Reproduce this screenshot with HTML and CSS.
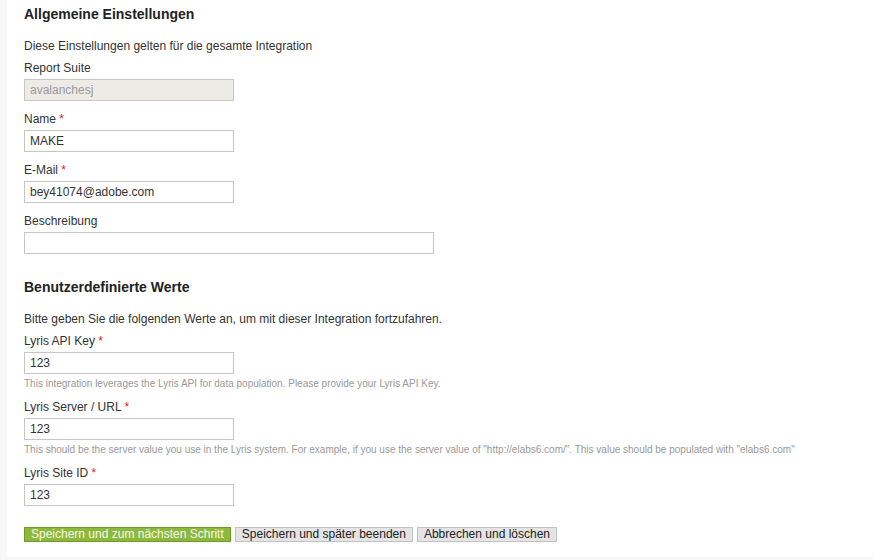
FILE: index.html
```html
<!DOCTYPE html>
<html lang="de">
<head>
<meta charset="utf-8">
<title>Allgemeine Einstellungen</title>
<link rel="stylesheet" href="styles.css">
</head>
<body>
<div class="page">
  <div class="panel">
    <section class="section">
      <h2 class="section-title">Allgemeine Einstellungen</h2>
      <p class="section-desc">Diese Einstellungen gelten für die gesamte Integration</p>
      <div class="field">
        <label class="field-label">Report Suite</label>
        <input class="text-input text-input--readonly" type="text" value="avalanchesj" readonly>
      </div>
      <div class="field">
        <label class="field-label">Name <span class="req">*</span></label>
        <input class="text-input" type="text" value="MAKE">
      </div>
      <div class="field">
        <label class="field-label">E-Mail <span class="req">*</span></label>
        <input class="text-input" type="text" value="bey41074@adobe.com">
      </div>
      <div class="field">
        <label class="field-label">Beschreibung</label>
        <input class="text-input text-input--wide" type="text" value="">
      </div>
    </section>
    <section class="section section--second">
      <h2 class="section-title">Benutzerdefinierte Werte</h2>
      <p class="section-desc">Bitte geben Sie die folgenden Werte an, um mit dieser Integration fortzufahren.</p>
      <div class="field field--help">
        <label class="field-label">Lyris API Key <span class="req">*</span></label>
        <input class="text-input" type="text" value="123">
        <div class="help">This integration leverages the Lyris API for data population. Please provide your Lyris API Key.</div>
      </div>
      <div class="field field--help">
        <label class="field-label">Lyris Server / URL <span class="req">*</span></label>
        <input class="text-input" type="text" value="123">
        <div class="help">This should be the server value you use in the Lyris system. For example, if you use the server value of "http://elabs6.com/". This value should be populated with "elabs6.com"</div>
      </div>
      <div class="field">
        <label class="field-label">Lyris Site ID <span class="req">*</span></label>
        <input class="text-input" type="text" value="123">
      </div>
    </section>
    <div class="actions">
      <button class="btn btn--primary" type="button">Speichern und zum nächsten Schritt</button>
      <button class="btn" type="button">Speichern und später beenden</button>
      <button class="btn" type="button">Abbrechen und löschen</button>
    </div>
  </div>
</div>
</body>
</html>
```
FILE: styles.css
```css
* { box-sizing: border-box; }
html, body {
  margin: 0;
  padding: 0;
  background: #f8f8f8;
  font-family: "Liberation Sans", Arial, sans-serif;
  font-size: 12px;
  color: #333;
}
.page {
  padding-left: 7px;
  height: 560px;
  overflow: hidden;
}
.panel {
  background: #fff;
  height: 557px;
  padding: 6px 17px 0;
}
.section-title {
  margin: 0 0 16px;
  font-size: 14px;
  line-height: 16px;
  font-weight: bold;
  color: #222;
}
.section--second { margin-top: 25px; }
.section-desc {
  margin: 0 0 6px;
  line-height: 16px;
}
.field { margin-bottom: 10px; }
.field--help { margin-bottom: 9px; }
.field-label {
  display: block;
  line-height: 16px;
  margin-bottom: 3px;
  color: #333;
}
.req { color: #e02020; }
.text-input {
  display: block;
  width: 210px;
  height: 22px;
  margin: 0;
  padding: 0 5px;
  border: 1px solid #c6c6c6;
  background: #fff;
  font-family: "Liberation Sans", Arial, sans-serif;
  font-size: 12px;
  color: #333;
  outline: none;
}
.text-input--readonly {
  background: #ecebe6;
  color: #999;
}
.text-input--wide { width: 410px; }
.help {
  margin-top: 3px;
  line-height: 13px;
  font-size: 10px;
  color: #999;
  white-space: nowrap;
}
.actions {
  display: flex;
  gap: 4px;
  margin-top: 21px;
}
.btn {
  height: 15px;
  padding: 0 6px;
  margin: 0;
  border: 1px solid #c2c2c2;
  background: #e4e4e4;
  font-family: "Liberation Sans", Arial, sans-serif;
  font-size: 12px;
  line-height: 13px;
  color: #222;
  border-radius: 0;
}
.btn--primary {
  background: #8db83c;
  border-color: #6f9b22;
  color: #f4fae8;
}
```
